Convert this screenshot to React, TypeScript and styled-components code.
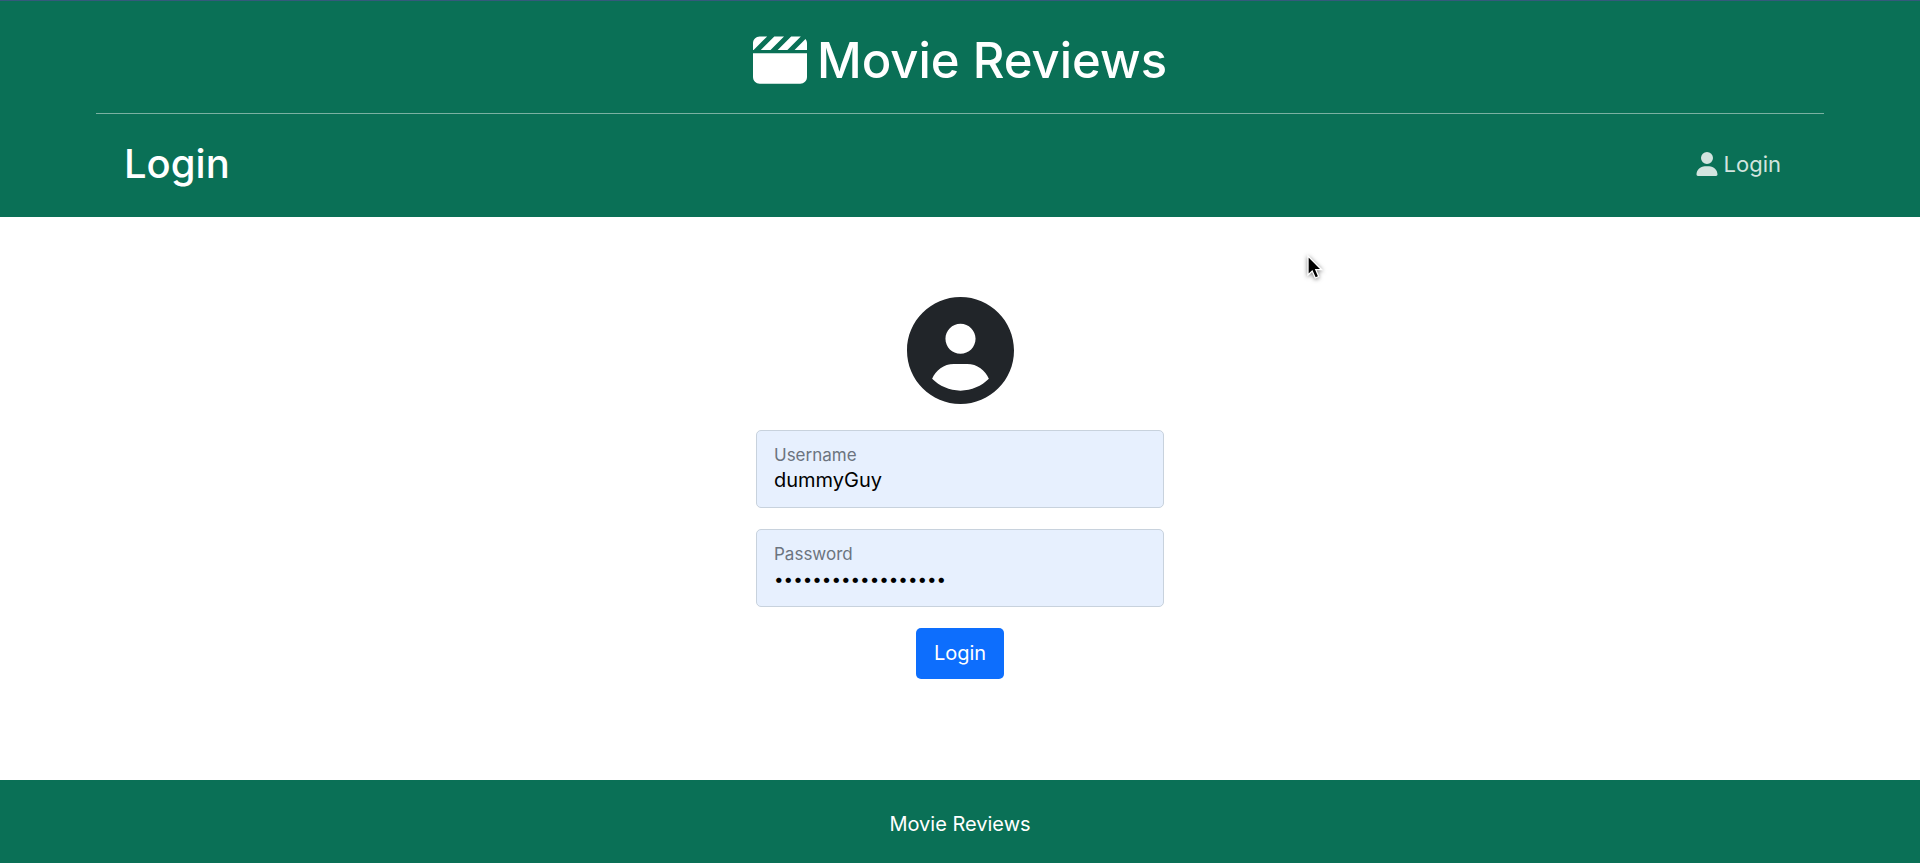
import React from "react";
import styled, { createGlobalStyle } from "styled-components";
import { FaUser } from "react-icons/fa6";

const GlobalStyle = createGlobalStyle`
  *, *::before, *::after { box-sizing: border-box; }
  body {
    margin: 0;
    background: #fff;
    color: #212529;
    font-family: Inter, "Liberation Sans", sans-serif;
    font-size: 20px;
    line-height: 32px;
  }
`;

const Page = styled.div`
  min-height: 100vh;
  display: flex;
  flex-direction: column;
`;

const Header = styled.header`
  background: #0a7056;
  color: #fff;
  border-top: 1px solid #35597c;
  padding: 28px 5% 21px;
`;

const Brand = styled.h1`
  display: flex;
  align-items: center;
  justify-content: center;
  gap: 10px;
  margin: 0;
  padding-bottom: 20px;
  border-bottom: 1px solid #7bb1a2;
  font-size: 49px;
  font-weight: 500;
  line-height: 64px;
`;

const BrandIcon = styled.svg`
  width: 54px;
  height: 54px;
  margin-bottom: 2px;
  fill: currentColor;
`;

const NavBar = styled.nav`
  display: flex;
  align-items: center;
  justify-content: space-between;
  padding: 18px 43px 0 28px;
  min-height: 82px;
`;

const PageTitle = styled.h2`
  margin: 0;
  font-size: 40px;
  font-weight: 500;
  line-height: 64px;
`;

const NavLink = styled.a`
  display: flex;
  align-items: center;
  gap: 5px;
  color: #d3e4df;
  font-size: 22px;
  text-decoration: none;
`;

const Main = styled.main`
  flex: 1;
  display: flex;
  justify-content: center;
  padding: 80px 16px 100px;
`;

const LoginForm = styled.form`
  display: flex;
  flex-direction: column;
  align-items: center;
  width: 100%;
  max-width: 408px;
`;

const Avatar = styled.svg`
  width: 107px;
  height: 107px;
  margin-bottom: 26px;
  fill: currentColor;
`;

const Field = styled.div`
  display: flex;
  flex-direction: column;
  width: 100%;
  height: 78px;
  margin-bottom: 21px;
  padding: 12px 17px;
  border: 1px solid #c8d2dd;
  border-radius: 5px;
  background: #e7f0fe;
`;

const Label = styled.label`
  color: #6c747f;
  font-size: 17px;
  line-height: 24px;
`;

const Input = styled.input`
  width: 100%;
  height: 26px;
  padding: 0;
  border: 0;
  outline: 0;
  background: transparent;
  color: #000;
  font-family: inherit;
  font-size: ${(p) => (p.type === "password" ? "17px" : "20px")};
`;

const SubmitButton = styled.button`
  padding: 10px 18px;
  min-height: 51px;
  border: 0;
  border-radius: 5px;
  background: #0d6efd;
  color: #fff;
  font-family: inherit;
  font-size: 20px;
  line-height: 31px;
`;

const Footer = styled.footer`
  padding: 28px 16px 23px;
  background: #0a7056;
  color: #fff;
  text-align: center;
`;

const Pointer = styled.svg`
  position: absolute;
  left: 68%;
  top: 254px;
  width: 18px;
  height: 28px;
  pointer-events: none;
  filter: drop-shadow(0 1px 2px rgba(0, 0, 0, 0.5));
`;

export default function App() {
  return (
    <Page>
      <GlobalStyle />
      <Header>
        <Brand>
          <BrandIcon viewBox="0 0 512 512" aria-hidden="true">
            <path d="M326.1 160l127.4-127.4C451.7 32.39 449.9 32 448 32h-86.06l-128 128H326.1zM166.1 160l128-128H201.9l-128 128H166.1zM497.7 56.19L393.9 160H512V96C512 80.87 506.5 67.15 497.7 56.19zM134.1 32H64C28.65 32 0 60.65 0 96v64h6.062L134.1 32zM0 416c0 35.35 28.65 64 64 64h384c35.35 0 64-28.65 64-64V192H0V416z" />
          </BrandIcon>
          Movie Reviews
        </Brand>
        <NavBar>
          <PageTitle>Login</PageTitle>
          <NavLink href="#login">
            <FaUser size={24} />
            Login
          </NavLink>
        </NavBar>
      </Header>
      <Main>
        <LoginForm onSubmit={(e) => e.preventDefault()}>
          <Avatar viewBox="0 0 512 512" aria-hidden="true">
            <path d="M256 0C114.6 0 0 114.6 0 256s114.6 256 256 256s256-114.6 256-256S397.4 0 256 0zM256 128c39.77 0 72 32.24 72 72S295.8 272 256 272c-39.76 0-72-32.24-72-72S216.2 128 256 128zM256 448c-52.93 0-100.9-21.53-135.7-56.29C136.5 349.9 176.5 320 224 320h64c47.54 0 87.54 29.88 103.7 71.71C356.9 426.5 308.9 448 256 448z" />
          </Avatar>
          <Field>
            <Label htmlFor="username">Username</Label>
            <Input id="username" type="text" defaultValue="dummyGuy" />
          </Field>
          <Field>
            <Label htmlFor="password">Password</Label>
            <Input id="password" type="password" defaultValue="dummyGuyPassword12" />
          </Field>
          <SubmitButton type="submit">Login</SubmitButton>
        </LoginForm>
      </Main>
      <Footer>Movie Reviews</Footer>
      <Pointer viewBox="0 0 18 28" aria-hidden="true">
        <path
          d="M2 2V21L6.200 17L9.300 24L12.700 22.500L9.800 15.700H15.700Z"
          fill="#000"
          stroke="#fff"
          strokeWidth="1.300"
        />
      </Pointer>
    </Page>
  );
}
